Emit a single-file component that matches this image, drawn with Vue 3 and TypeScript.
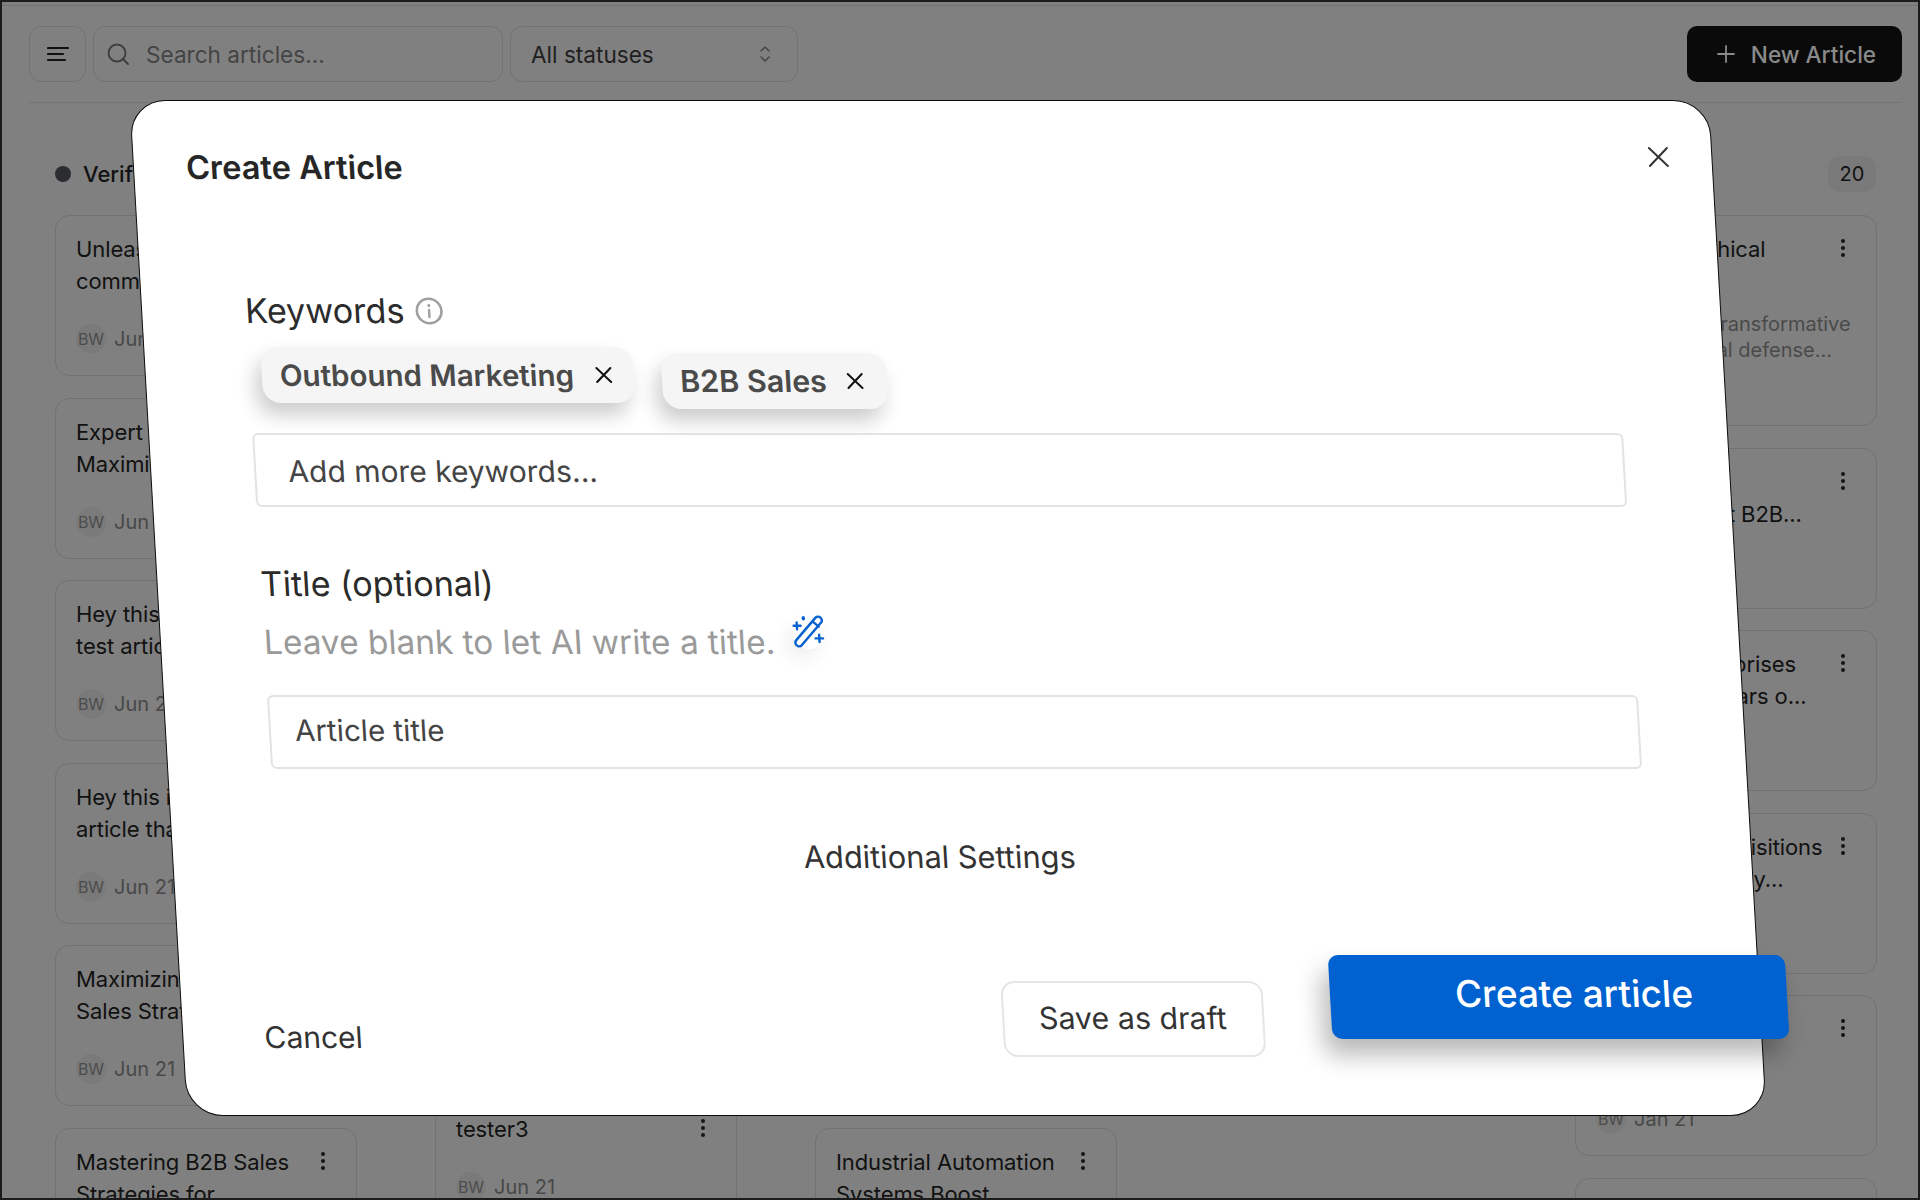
<script setup lang="ts">
interface Card {
  title: string[];
  desc?: string[];
  date?: string;
  height: number;
}

const columns: { name: string; count: number; cards: Card[] }[] = [
  {
    name: "Verified",
    count: 20,
    cards: [
      { title: ["Unleash the power of", "community"], date: "Jun 21", height: 161 },
      { title: ["Expert Insights:", "Maximizing Reach"], date: "Jun 21", height: 161 },
      { title: ["Hey this is a", "test article"], date: "Jun 21", height: 161 },
      { title: ["Hey this is an", "article that"], date: "Jun 21", height: 161 },
      { title: ["Maximizing B2B", "Sales Strategies"], date: "Jun 21", height: 161 },
      { title: ["Mastering B2B Sales", "Strategies for"], height: 161 },
    ],
  },
  {
    name: "Draft",
    count: 20,
    cards: [
      { title: ["Draft article"], date: "Jun 21", height: 161 },
      { title: ["Draft article"], date: "Jun 21", height: 161 },
      { title: ["Draft article"], date: "Jun 21", height: 161 },
      { title: ["Draft article"], date: "Jun 21", height: 161 },
      { title: ["Draft article"], date: "Jun 21", height: 128 },
      { title: ["tester3"], date: "Jun 21", height: 161 },
    ],
  },
  {
    name: "Review",
    count: 20,
    cards: [
      { title: ["Review article"], date: "Jun 21", height: 161 },
      { title: ["Review article"], date: "Jun 21", height: 161 },
      { title: ["Review article"], date: "Jun 21", height: 161 },
      { title: ["Review article"], date: "Jun 21", height: 161 },
      { title: ["Review article"], date: "Jun 21", height: 161 },
      { title: ["Industrial Automation", "Systems Boost"], height: 161 },
    ],
  },
  { name: "Scheduled", count: 0, cards: [] },
  {
    name: "Published",
    count: 20,
    cards: [
      {
        title: ["A Shift of Ethical"],
        desc: ["AI delivered transformative", "for your digital defense..."],
        height: 211,
      },
      { title: ["Scaling B2B", "Aim for smart B2B..."], height: 161 },
      { title: ["Smaller Enterprises", "after many years o..."], height: 161 },
      { title: ["Merger & Acquisitions", "A Sales Strategy..."], height: 161 },
      { title: ["Compliance", "Sales Next"], date: "Jan 21", height: 161 },
      { title: ["Next article"], height: 161 },
    ],
  },
];

const keywords = ["Outbound Marketing", "B2B Sales"];
</script>

<template>
  <div class="page">
    <header class="toolbar">
      <button class="icon-btn">
        <svg width="22" height="16" viewBox="0 0 22 16" fill="none" stroke="#111" stroke-width="2.2" stroke-linecap="round">
          <path d="M1 2h20M1 8h15M1 14h17" />
        </svg>
      </button>
      <div class="search">
        <svg width="24" height="24" viewBox="0 0 24 24" fill="none" stroke="#3c3c3c" stroke-width="1.8" stroke-linecap="round">
          <circle cx="11" cy="11" r="8.5" />
          <path d="M17.5 17.5L22 22" />
        </svg>
        <span>Search articles...</span>
      </div>
      <div class="status">
        <span>All statuses</span>
        <svg width="12" height="20" viewBox="0 0 12 20" fill="none" stroke="#444" stroke-width="1.5" stroke-linecap="round" stroke-linejoin="round">
          <path d="M2 7l4-4 4 4M2 13l4 4 4-4" />
        </svg>
      </div>
      <button class="new-btn">
        <svg width="18" height="18" viewBox="0 0 18 18" stroke="#8a8a8a" stroke-width="1.8" stroke-linecap="round">
          <path d="M9 1v16M1 9h16" />
        </svg>
        <span>New Article</span>
      </button>
    </header>

    <main class="board">
      <section v-for="col in columns" :key="col.name" class="column">
        <div class="col-head">
          <span class="col-dot"></span>
          <span class="col-name">{{ col.name }}</span>
          <span v-if="col.count" class="col-count">{{ col.count }}</span>
        </div>
        <article v-for="(card, i) in col.cards" :key="i" class="card" :style="{ height: card.height + 'px' }">
          <div class="card-top">
            <div class="card-title">
              <div v-for="line in card.title" :key="line">{{ line }}</div>
            </div>
            <span class="dots"><i></i><i></i><i></i></span>
          </div>
          <div v-if="card.desc" class="card-desc">
            <div v-for="line in card.desc" :key="line">{{ line }}</div>
          </div>
          <div v-if="card.date" class="card-foot">
            <span class="avatar">BW</span>
            <span>{{ card.date }}</span>
          </div>
        </article>
      </section>
    </main>

    <div class="modal">
      <h2 class="modal-title">Create Article</h2>
      <button class="close">
        <svg width="24" height="24" viewBox="0 0 24 24" stroke="#333" stroke-width="2" stroke-linecap="round">
          <path d="M3 3l18 18M21 3L3 21" />
        </svg>
      </button>

      <div class="field-label">
        <span>Keywords</span>
        <svg width="28" height="28" viewBox="0 0 28 28" fill="none" stroke="#a0a0a0">
          <circle cx="14" cy="14" r="12.3" stroke-width="2.6" />
          <path d="M14 13v7" stroke-width="2.4" stroke-linecap="round" />
          <path d="M14 8.4v.4" stroke-width="2.8" stroke-linecap="round" />
        </svg>
      </div>

      <div class="chips">
        <span v-for="kw in keywords" :key="kw" class="chip">
          <b>{{ kw }}</b>
          <svg width="20" height="20" viewBox="0 0 20 20" stroke="#111" stroke-width="2" stroke-linecap="round">
            <path d="M3 3l14 14M17 3L3 17" />
          </svg>
        </span>
      </div>

      <div class="input keywords-input">Add more keywords...</div>

      <div class="field-label title-label">Title (optional)</div>
      <div class="hint">
        <span>Leave blank to let AI write a title.</span>
        <span class="wand-wrap">
          <svg width="32" height="34" viewBox="0 0 30 32" fill="none" stroke="#0a62d0" stroke-width="2.300" stroke-linecap="round" stroke-linejoin="round">
            <path d="M22.500 2.500a3.400 3.400 0 0 1 5 4.600L8 28.500a3.400 3.400 0 0 1-5-4.600z" />
            <path d="M20 6.500l5 4.500" />
            <path d="M4.500 7v6.500M1.500 10.200h6.500" />
            <path d="M11 2.500v1" stroke-width="3.200" />
            <path d="M25 18.500v7M21.500 22h7" />
          </svg>
        </span>
      </div>

      <div class="input title-input">Article title</div>

      <div class="additional">Additional Settings</div>

      <footer class="modal-foot">
        <button class="cancel">Cancel</button>
        <button class="draft">Save as draft</button>
        <button class="create">Create article</button>
      </footer>
    </div>
  </div>
</template>

<style scoped>
.page {
  position: relative;
  width: 1920px;
  height: 1200px;
  box-sizing: border-box;
  overflow: hidden;
  background: #808080;
  border: 2px solid #1c1c1c;
  box-shadow: inset 0 3px 0 #808080, inset 0 4px 0 #747474;
  padding: 24px 16px 0 27px;
  font-family: Inter, "Liberation Sans", sans-serif;
  color: #111;
}

.toolbar {
  display: flex;
  align-items: stretch;
  gap: 7px;
  height: 56px;
  padding-bottom: 20px;
  border-bottom: 1px solid #747474;
}

.toolbar button {
  font-family: inherit;
}

.icon-btn,
.search,
.status {
  box-sizing: border-box;
  border: 1px solid #727272;
  border-radius: 12px;
  background: #808080;
  display: flex;
  align-items: center;
}

.icon-btn {
  width: 57px;
  justify-content: center;
  padding: 0;
}

.search {
  width: 410px;
  padding-left: 12px;
  gap: 16px;
  font-size: 22.6px;
  color: #444;
}

.status {
  width: 288px;
  padding: 0 26px 0 20px;
  justify-content: space-between;
  font-size: 22.6px;
  color: #1f1f1f;
}

.new-btn {
  margin-left: auto;
  width: 215px;
  display: flex;
  align-items: center;
  justify-content: center;
  gap: 16px;
  padding: 0 0 0 4px;
  border: 0;
  border-radius: 10px;
  background: #0a0a0a;
  color: #8a8a8a;
  font-size: 22.6px;
  font-weight: 500;
}

.board {
  display: flex;
  gap: 78px;
  margin-top: 40px;
  padding-left: 26px;
}

.column {
  flex: 0 0 302px;
  display: flex;
  flex-direction: column;
  gap: 21.500px;
}

.col-head {
  display: flex;
  align-items: center;
  height: 36px;
  font-size: 22px;
  font-weight: 500;
  margin: 13px 0 1.500px;
}

.col-dot {
  width: 16px;
  height: 16px;
  border-radius: 50%;
  background: #2b2d31;
  margin-right: 12px;
}

.col-count {
  margin-left: auto;
  width: 48px;
  height: 36px;
  border-radius: 12px;
  background: #7a7a7a;
  font-size: 20px;
  font-weight: 400;
  display: flex;
  align-items: center;
  justify-content: center;
  margin-right: 1px;
}

.card {
  box-sizing: border-box;
  flex: none;
  border: 1px solid #727272;
  border-radius: 14px;
  padding: 17px 20px;
}

.card-top {
  display: flex;
  justify-content: space-between;
}

.card-title {
  font-size: 22px;
  line-height: 32px;
  letter-spacing: -0.1px;
  color: #111;
}

.dots {
  display: flex;
  flex-direction: column;
  gap: 3px;
  margin: 6px 11px 0 0;
}

.dots i {
  width: 4px;
  height: 4px;
  border-radius: 50%;
  background: #151515;
}

.card-desc {
  margin-top: 46px;
  font-size: 20px;
  line-height: 26px;
  color: #4a4a4a;
}

.card-foot {
  display: flex;
  align-items: center;
  gap: 8px;
  margin-top: 27px;
  font-size: 20px;
  color: #484848;
}

.avatar {
  width: 30px;
  height: 30px;
  border-radius: 50%;
  background: #7a7a7a;
  font-size: 16px;
  display: flex;
  align-items: center;
  justify-content: center;
  color: #4c4c4c;
}

.modal {
  position: absolute;
  left: 156px;
  top: 98px;
  box-sizing: border-box;
  width: 1580px;
  height: 1016px;
  padding: 47px 104px 0 103px;
  background: #fff;
  border: 1.500px solid #0c0c0c;
  border-radius: 36px;
  transform: skewX(3.25deg);
  color: #2b2b2b;
  display: flex;
  flex-direction: column;
}

.modal-title {
  margin: 0 0 0 -51px;
  font-size: 32.500px;
  line-height: 40px;
  font-weight: 600;
  color: #262626;
}

.close {
  position: absolute;
  right: 41px;
  top: 44px;
  padding: 0;
  border: 0;
  background: none;
  display: flex;
}

.field-label {
  display: flex;
  align-items: center;
  gap: 11px;
  margin-top: 101px;
  font-size: 34.200px;
  line-height: 44px;
}

.chips {
  display: flex;
  align-items: flex-start;
  gap: 28px;
  margin: 14px 0 0 13px;
  height: 61px;
}

.chip {
  display: flex;
  align-items: center;
  gap: 20px;
  height: 56px;
  padding: 0 20px 0 18px;
  border-radius: 18px;
  background: #f5f5f5;
  box-shadow: -6px 12px 20px rgba(0, 0, 0, 0.2);
  font-size: 29.500px;
  color: #4a4a4a;
}

.chip b {
  font-weight: 600;
}

.chip + .chip {
  margin-top: 6px;
  gap: 18px;
  padding-right: 22px;
  font-size: 30.400px;
}

.input {
  box-sizing: border-box;
  height: 74px;
  border: 2px solid #e3e3e3;
  border-radius: 6px;
  display: flex;
  align-items: center;
  padding-left: 32px;
  font-size: 30px;
  color: #444;
}

.keywords-input {
  margin-top: 25px;
  padding-top: 2px;
}

.title-label {
  margin-top: 55px;
}

.hint {
  display: flex;
  align-items: flex-start;
  gap: 18px;
  margin-top: 14px;
  font-size: 33.400px;
  line-height: 44px;
  color: #9a9a9a;
}

.wand-wrap {
  margin-top: -5px;
  display: flex;
  border-radius: 50%;
  box-shadow: -6px 10px 20px rgba(0, 0, 0, 0.07);
}

.title-input {
  margin-top: 30.500px;
  padding-left: 24px;
  padding-bottom: 4px;
  font-size: 29.600px;
}

.additional {
  margin-top: 68px;
  padding-right: 44px;
  text-align: center;
  font-size: 30.800px;
  line-height: 40px;
  font-weight: 400;
  color: #333;
}

.modal-foot {
  display: flex;
  align-items: flex-start;
  margin: 78px -104px 0 -22px;
}

.modal-foot button {
  font-family: inherit;
}

.cancel {
  margin-top: 62px;
  padding: 0;
  border: 0;
  background: none;
  font-size: 30px;
  line-height: 40px;
  color: #333;
}

.draft {
  margin: 26px 0 0 auto;
  width: 262px;
  height: 76px;
  padding-bottom: 2px;
  border: 2px solid #e6e6e6;
  border-radius: 14px;
  background: #fff;
  font-size: 30.400px;
  color: #333;
}

.create {
  margin: 0 -27.500px 0 67px;
  width: 457px;
  height: 84px;
  padding: 0 0 7px 32px;
  border: 0;
  border-radius: 10px;
  background: #0062d1;
  box-shadow: -8px 16px 24px rgba(0, 0, 0, 0.28);
  color: #fff;
  font-size: 37px;
  font-weight: 500;
}
</style>
